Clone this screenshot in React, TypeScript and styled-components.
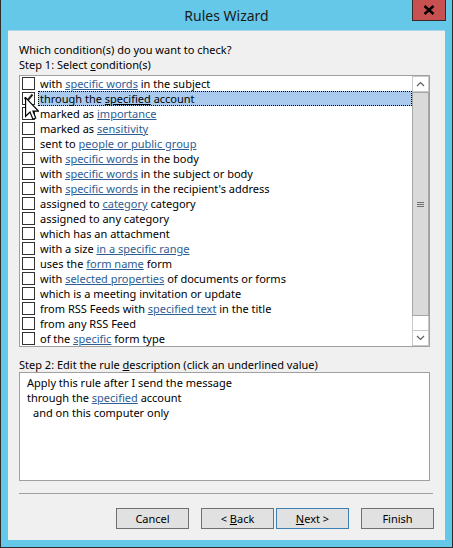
import styled, { createGlobalStyle } from "styled-components";

const Global = createGlobalStyle`
  html, body { margin: 0; padding: 0; background: #2b2b2b; }
  body { font-family: "Noto Sans", "Open Sans", sans-serif; font-size: 11px; color: #000; }
`;

type Part = string | { link: string };

const conditions: Part[][] = [
  ["with ", { link: "specific words" }, " in the subject"],
  ["through the ", { link: "specified" }, " account"],
  ["marked as ", { link: "importance" }],
  ["marked as ", { link: "sensitivity" }],
  ["sent to ", { link: "people or public group" }],
  ["with ", { link: "specific words" }, " in the body"],
  ["with ", { link: "specific words" }, " in the subject or body"],
  ["with ", { link: "specific words" }, " in the recipient's address"],
  ["assigned to ", { link: "category" }, " category"],
  ["assigned to any category"],
  ["which has an attachment"],
  ["with a size ", { link: "in a specific range" }],
  ["uses the ", { link: "form name" }, " form"],
  ["with ", { link: "selected properties" }, " of documents or forms"],
  ["which is a meeting invitation or update"],
  ["from RSS Feeds with ", { link: "specified text" }, " in the title"],
  ["from any RSS Feed"],
  ["of the ", { link: "specific" }, " form type"],
];

export default function App() {
  const selected = 1;
  return (
    <>
      <Global />
      <Window>
        <TitleBar>
          <Title>Rules Wizard</Title>
          <CloseButton>
            <svg width="12" height="10" viewBox="0 0 12 10">
              <path d="M1.5 1 L10.5 9 M10.5 1 L1.5 9" stroke="#000" strokeWidth="2.4" />
            </svg>
          </CloseButton>
        </TitleBar>
        <Client>
          <Label>Which condition(s) do you want to check?</Label>
          <Label>
            Step 1: Select <u>c</u>ondition(s)
          </Label>
          <ListBox>
            <Rows>
              {conditions.map((parts, i) => (
                <Row key={i}>
                  <CheckBox>
                    {i === selected && (
                      <svg width="11" height="11" viewBox="0 0 11 11">
                        <path d="M1.5 4.5 L4.5 7.5 L9.5 1.5" stroke="#222" strokeWidth="2" fill="none" />
                      </svg>
                    )}
                  </CheckBox>
                  <RowText $selected={i === selected}>
                    {parts.map((p, j) =>
                      typeof p === "string" ? (
                        <span key={j}>{p}</span>
                      ) : (
                        <Link key={j} $selected={i === selected}>
                          {p.link}
                        </Link>
                      )
                    )}
                  </RowText>
                </Row>
              ))}
            </Rows>
            <ScrollBar>
              <ScrollButton>
                <svg width="9" height="6" viewBox="0 0 9 6">
                  <path d="M1 5 L4.5 1.5 L8 5" stroke="#606060" strokeWidth="1.2" fill="none" />
                </svg>
              </ScrollButton>
              <Thumb>
                <Grip />
                <Grip />
                <Grip />
              </Thumb>
              <Track />
              <ScrollButton>
                <svg width="9" height="6" viewBox="0 0 9 6">
                  <path d="M1 1 L4.5 4.5 L8 1" stroke="#606060" strokeWidth="1.2" fill="none" />
                </svg>
              </ScrollButton>
            </ScrollBar>
            <Cursor width="14" height="24" viewBox="0 0 12 20.5">
              <path
                d="M0.5 0.5 L0.5 16.5 L4.3 12.8 L6.8 19 L9.2 18 L6.8 12 L11.5 12 Z"
                fill="#fff"
                stroke="#000"
                strokeWidth="1"
                strokeLinejoin="miter"
              />
            </Cursor>
          </ListBox>
          <StepTwo>
            Step 2: Edit the rule <u>d</u>escription (click an underlined value)
          </StepTwo>
          <DescBox>
            <DescLine>Apply this rule after I send the message</DescLine>
            <DescLine>
              through the <Link>specified</Link> account
            </DescLine>
            <DescLine $indent>and on this computer only</DescLine>
          </DescBox>
          <Separator />
          <Buttons>
            <Button>Cancel</Button>
            <ButtonPair>
              <Button>
                {"< "}
                <u>B</u>ack
              </Button>
              <Button $default>
                <u>N</u>
                {"ext >"}
              </Button>
            </ButtonPair>
            <Button>Finish</Button>
          </Buttons>
        </Client>
      </Window>
    </>
  );
}

const Window = styled.div`
  width: 453px;
  height: 548px;
  box-sizing: border-box;
  border: 1px solid #2b2b2b;
  border-top: none;
  background: #65c8e9;
  display: flex;
  flex-direction: column;
  padding: 0 7px 7px 7px;
`;

const TitleBar = styled.div`
  height: 30px;
  position: relative;
  display: flex;
  align-items: center;
  justify-content: center;
  flex-shrink: 0;
`;

const Title = styled.div`
  font-family: "Noto Sans", sans-serif;
  font-size: 14px;
  color: #1a1a1a;
`;

const CloseButton = styled.div`
  position: absolute;
  top: 0;
  right: -1px;
  width: 32px;
  height: 20px;
  background: #c75050;
  border: 1px solid #3a2a2a;
  border-top: none;
  display: flex;
  align-items: center;
  justify-content: center;
`;

const Client = styled.div`
  flex: 1;
  background: #f0f0f0;
  border-top: 1px solid #a8d6ea;
  padding: 11px;
  display: flex;
  flex-direction: column;
`;

const Label = styled.div`
  line-height: 15px;
  height: 15px;
  white-space: nowrap;
`;

const ListBox = styled.div`
  position: relative;
  margin-top: 3px;
  width: 411px;
  height: 272px;
  box-sizing: border-box;
  border: 1px solid #a0a0a0;
  background: #fff;
  display: flex;
`;

const Rows = styled.div`
  flex: 1;
  display: flex;
  flex-direction: column;
`;

const Row = styled.div`
  height: 15px;
  display: flex;
  align-items: center;
`;

const CheckBox = styled.div`
  width: 11px;
  height: 11px;
  border: 1px solid #333;
  background: #fff;
  margin-left: 2px;
  margin-right: 3px;
  display: flex;
  align-items: center;
  justify-content: center;
`;

const RowText = styled.div<{ $selected?: boolean }>`
  flex: 1;
  height: 15px;
  box-sizing: border-box;
  line-height: 15px;
  padding-left: 2px;
  white-space: nowrap;
  background: ${(p) => (p.$selected ? "#aacbee" : "transparent")};
  outline: ${(p) => (p.$selected ? "1px dotted #000" : "none")};
  outline-offset: -1px;
`;

const Link = styled.span<{ $selected?: boolean }>`
  color: ${(p) => (p.$selected ? "#000" : "#2e5d93")};
  text-decoration: underline;
`;

const ScrollBar = styled.div`
  width: 17px;
  display: flex;
  flex-direction: column;
  background: #f0f0f0;
`;

const ScrollButton = styled.div`
  height: 16px;
  box-sizing: border-box;
  border: 1px solid #c8c8c8;
  background: #fff;
  display: flex;
  align-items: center;
  justify-content: center;
  flex-shrink: 0;
`;

const Thumb = styled.div`
  height: 224px;
  box-sizing: border-box;
  border: 1px solid #a6a6a6;
  background: #dadada;
  display: flex;
  flex-direction: column;
  align-items: center;
  justify-content: center;
  gap: 1px;
  flex-shrink: 0;
`;

const Grip = styled.div`
  width: 7px;
  height: 1px;
  background: #707070;
`;

const Track = styled.div`
  flex: 1;
  background: #fff;
  border-left: 1px solid #c8c8c8;
  border-right: 1px solid #c8c8c8;
`;

const Cursor = styled.svg`
  position: absolute;
  left: 5px;
  top: 21px;
`;

const StepTwo = styled(Label)`
  margin-top: 10px;
`;

const DescBox = styled.div`
  width: 411px;
  height: 109px;
  box-sizing: border-box;
  border: 1px solid #a0a0a0;
  background: #fff;
  padding: 2px 0 0 7px;
`;

const DescLine = styled.div<{ $indent?: boolean }>`
  line-height: 15px;
  padding-left: ${(p) => (p.$indent ? "6px" : "0")};
`;

const Separator = styled.div`
  margin-top: 12px;
  height: 1px;
  width: 414px;
  background: #a0a0a0;
`;

const Buttons = styled.div`
  margin-top: 14px;
  display: flex;
  justify-content: flex-end;
  gap: 12px;
`;

const ButtonPair = styled.div`
  display: flex;
  gap: 2px;
`;

const Button = styled.div<{ $default?: boolean }>`
  width: 73px;
  height: 21px;
  box-sizing: border-box;
  border: 1px solid ${(p) => (p.$default ? "#3c7fb1" : "#707070")};
  background: #e1e1e1;
  display: flex;
  align-items: center;
  justify-content: center;
  white-space: pre;
`;
